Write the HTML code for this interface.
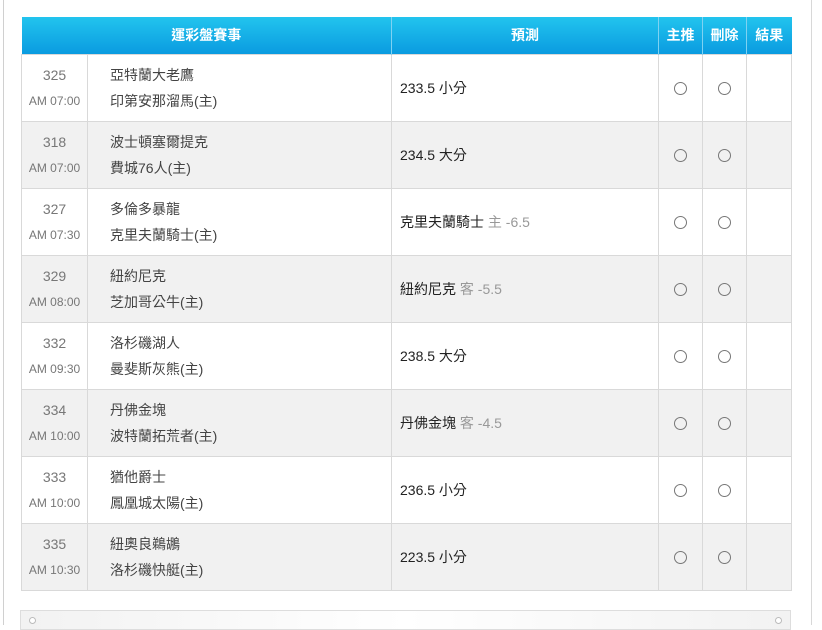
<!DOCTYPE html>
<html><head><meta charset="utf-8"><style>
*{margin:0;padding:0;box-sizing:border-box}
body{width:822px;height:625px;background:#fff;position:relative;overflow:hidden;font-family:"Liberation Sans","Noto Sans CJK TC",sans-serif;}
.lb{position:absolute;left:3px;top:0;width:1px;height:625px;background:#d0d0d0}
.rb{position:absolute;left:811px;top:0;width:1px;height:625px;background:#d8d8d8}
table{position:absolute;left:21px;top:17px;border-collapse:collapse;width:770px;table-layout:fixed}
th{height:37px;color:#fff;font-size:14px;font-weight:bold;background:linear-gradient(#22c4ee,#0a9be0);border-right:1px solid #7fd2f2}
th:last-child{border-right:none}
td{height:67px;border:1px solid #d9d9d9;font-size:14px;color:#333;vertical-align:middle}
tr.g td{background:#f1f1f1}
.n{text-align:center;color:#777;font-size:14px;line-height:26px}
.n small{font-size:12px;display:block}
.t{padding-left:22px;line-height:26px;color:#444}
.p{padding-left:8px;color:#222}
.p span{color:#999}
.c{text-align:center}
.o{display:inline-block;width:13px;height:13px;border:1px solid #777;border-radius:50%;vertical-align:middle}
.box{position:absolute;left:20px;top:610px;width:771px;height:20px;border:1px solid #ddd;background:linear-gradient(90deg,#f2f2f2,#fff,#f2f2f2)}
.box i{position:absolute;top:6px;width:7px;height:7px;border:1px solid #bbb;border-radius:50%;background:#fff}
</style></head><body>
<div class="lb"></div><div class="rb"></div>
<table>
<colgroup><col style="width:66px"><col style="width:304px"><col style="width:267px"><col style="width:44px"><col style="width:44px"><col style="width:45px"></colgroup>
<tr><th colspan="2">運彩盤賽事</th><th>預測</th><th>主推</th><th>刪除</th><th>結果</th></tr>
<tr><td class="n">325<small>AM 07:00</small></td><td class="t">亞特蘭大老鷹<br>印第安那溜馬(主)</td><td class="p">233.5 小分</td><td class="c"><i class="o"></i></td><td class="c"><i class="o"></i></td><td></td></tr>
<tr class="g"><td class="n">318<small>AM 07:00</small></td><td class="t">波士頓塞爾提克<br>費城76人(主)</td><td class="p">234.5 大分</td><td class="c"><i class="o"></i></td><td class="c"><i class="o"></i></td><td></td></tr>
<tr><td class="n">327<small>AM 07:30</small></td><td class="t">多倫多暴龍<br>克里夫蘭騎士(主)</td><td class="p">克里夫蘭騎士 <span>主 -6.5</span></td><td class="c"><i class="o"></i></td><td class="c"><i class="o"></i></td><td></td></tr>
<tr class="g"><td class="n">329<small>AM 08:00</small></td><td class="t">紐約尼克<br>芝加哥公牛(主)</td><td class="p">紐約尼克 <span>客 -5.5</span></td><td class="c"><i class="o"></i></td><td class="c"><i class="o"></i></td><td></td></tr>
<tr><td class="n">332<small>AM 09:30</small></td><td class="t">洛杉磯湖人<br>曼斐斯灰熊(主)</td><td class="p">238.5 大分</td><td class="c"><i class="o"></i></td><td class="c"><i class="o"></i></td><td></td></tr>
<tr class="g"><td class="n">334<small>AM 10:00</small></td><td class="t">丹佛金塊<br>波特蘭拓荒者(主)</td><td class="p">丹佛金塊 <span>客 -4.5</span></td><td class="c"><i class="o"></i></td><td class="c"><i class="o"></i></td><td></td></tr>
<tr><td class="n">333<small>AM 10:00</small></td><td class="t">猶他爵士<br>鳳凰城太陽(主)</td><td class="p">236.5 小分</td><td class="c"><i class="o"></i></td><td class="c"><i class="o"></i></td><td></td></tr>
<tr class="g"><td class="n">335<small>AM 10:30</small></td><td class="t">紐奧良鵜鶘<br>洛杉磯快艇(主)</td><td class="p">223.5 小分</td><td class="c"><i class="o"></i></td><td class="c"><i class="o"></i></td><td></td></tr>
</table>
<div class="box"><i style="left:8px"></i><i style="right:8px"></i></div>
</body></html>
